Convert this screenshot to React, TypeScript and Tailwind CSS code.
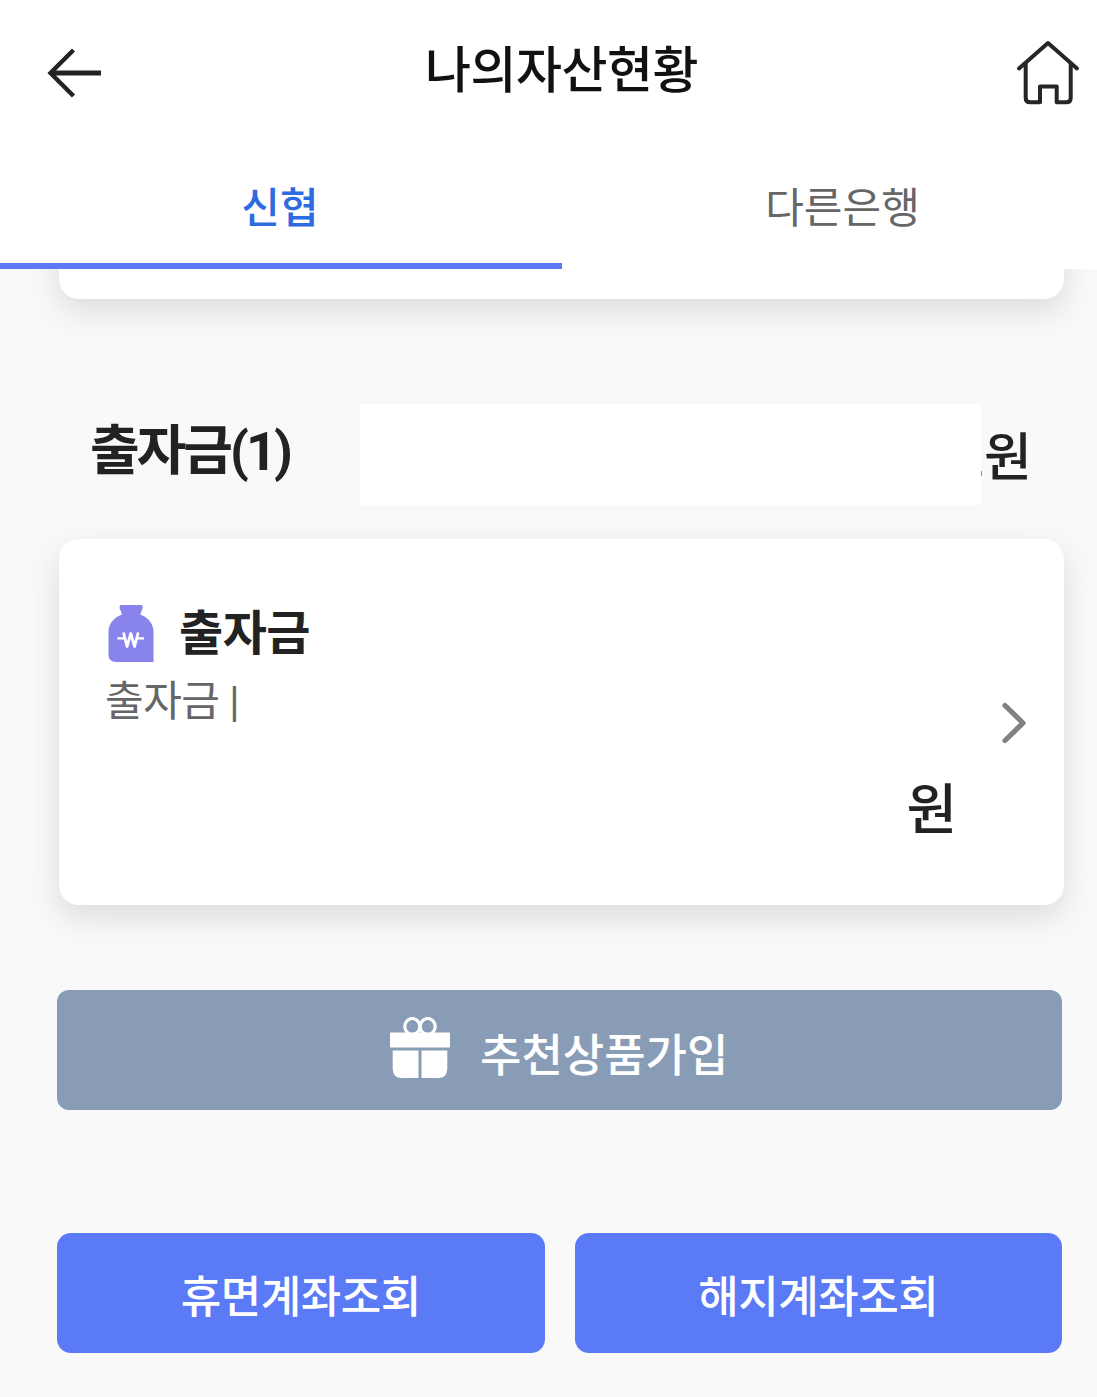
import React from "react";

function BackIcon() {
  return (
    <svg width="56" height="52" viewBox="0 0 56 52" fill="none" stroke="#222" strokeWidth="4.4">
      <path d="M26.500 3 3.500 26l23 23" />
      <path d="M4 26H54" strokeWidth="4.800" />
    </svg>
  );
}

function HomeIcon() {
  return (
    <svg width="64" height="66" viewBox="0 0 64 66" fill="none" stroke="#262626" strokeWidth="4" strokeLinecap="round" strokeLinejoin="round">
      <path d="M3 28.500 32 3l29 25.500" />
      <path d="M9.700 23.500V58q0 4.300 4.500 4.300H24V46.500H40.700V62.300h9.500q4.500 0 4.500-4.300V23.500" />
    </svg>
  );
}

function BottleIcon() {
  return (
    <svg width="46" height="58" viewBox="0 0 46 58" fill="none">
      <path
        fill="#8884ec"
        d="M13 0H33q2.500 0 1.500 3.500L32.300 9.500C40 12.500 45.500 18.500 45.500 26.500V57H8Q.5 57 .5 49.500V26.500C.5 18.500 6 12.500 14 9.500L11.800 3.500Q11 0 13 0Z"
      />
      <path d="M15.500 27.500 19 41.500 22.800 28.500 26.600 41.500 30.200 27.500" stroke="#fff" strokeWidth="2.800" strokeLinejoin="round" />
      <path d="M9.500 33.300H16.500M29 33.300H36" stroke="#fff" strokeWidth="2.300" />
    </svg>
  );
}

function GiftIcon() {
  return (
    <svg width="60" height="62" viewBox="0 0 60 62" fill="none">
      <g stroke="#fff" strokeWidth="3.200">
        <ellipse cx="22.300" cy="9.500" rx="7.500" ry="8" />
        <ellipse cx="37.700" cy="9.500" rx="7.500" ry="8" />
      </g>
      <path fill="#fff" d="M0 15.500H60V30.500H0ZM2.700 33.500H28.500V61H12Q2.700 61 2.700 51.500ZM31.500 33.500H57.300V51.500Q57.300 61 48 61H31.500Z" />
    </svg>
  );
}

function ChevronIcon() {
  return (
    <svg width="26" height="42" viewBox="0 0 26 42" fill="none" stroke="#808184" strokeWidth="5.2" strokeLinecap="round" strokeLinejoin="round">
      <path d="M4 3.500 22 21 4 38.500" />
    </svg>
  );
}

export default function App() {
  return (
    <div className="flex h-[1397px] w-[1097px] flex-col overflow-hidden bg-[#f9f9f9] font-['Noto_Sans_CJK_KR',sans-serif] whitespace-nowrap text-[#222]">
      <div className="relative z-10 bg-white">
        <header className="flex h-[134px] items-start justify-between pr-[17px] pl-[47px]">
          <button className="mt-[47px]"><BackIcon /></button>
          <h1 className="mt-[30px] ml-[4px] text-[50px] leading-[72px] font-medium tracking-[-0.5px] text-[#111]">나의자산현황</h1>
          <button className="mt-[40px]"><HomeIcon /></button>
        </header>
        <nav className="flex h-[135px] text-[42px] leading-[60px]">
          <button className="flex w-[562px] shrink-0 justify-center border-b-[6px] border-[#5d79f5] pt-[41px] pr-[2px] font-medium text-[#2f6be0]">신협</button>
          <button className="flex w-[561px] shrink-0 justify-center pt-[41px] text-[#666]">다른은행</button>
        </nav>
      </div>

      <main className="flex w-[1097px] flex-col pr-[33px] pl-[59px]">
        <div className="-mt-[70px] h-[100px] rounded-[20px] bg-white shadow-[0_12px_32px_rgba(0,0,0,0.12)]" />

        <section className="mt-[105px] flex h-[101px] pl-[31px]">
          <h2 className="mt-[4px] w-[270px] text-[54px] leading-[78px] font-bold tracking-[-3px]">
            출자금<span className="font-[Roboto,sans-serif]">(1)</span>
          </h2>
          <div className="w-[621px] bg-white" />
          <div className="mt-[67px] h-[5px] w-px bg-[#6d93bd]" />
          <span className="mt-[14px] ml-[2px] text-[52px] leading-[72px] font-medium">원</span>
        </section>

        <section className="mt-[34px] flex h-[366px] rounded-[20px] bg-white pl-[46px] shadow-[0_12px_32px_rgba(0,0,0,0.12)]">
          <div className="flex w-[855px] flex-col">
            <div className="mt-[56px] flex h-[72px] pl-[3px]">
              <div className="mt-[10px]"><BottleIcon /></div>
              <h3 className="-mt-[2px] ml-[25px] text-[48px] leading-[72px] font-bold tracking-[-0.5px]">출자금</h3>
            </div>
            <p className="mt-[1px] h-[60px] text-[42px] leading-[60px] tracking-[-0.5px] text-[#666]">
              출자금<span className="font-[Roboto,sans-serif]"> |</span>
            </p>
            <p className="mt-[37px] pr-[3px] text-right text-[55px] leading-[80px] font-medium">원</p>
          </div>
          <button className="mt-[163px] ml-[41px] h-[42px]"><ChevronIcon /></button>
        </section>
      </main>

      <div className="mt-[85px] pr-[35px] pl-[57px]">
        <button className="flex h-[120px] w-full rounded-[12px] bg-[#899cb5] pl-[333px] text-white">
          <span className="mt-[27px]"><GiftIcon /></span>
          <span className="mt-[29px] ml-[30px] text-[45px] leading-[68px] font-medium">추천상품가입</span>
        </button>
        <div className="mt-[123px] grid grid-cols-2 gap-[30px] text-[44px] leading-[64px] font-medium tracking-[-0.5px] text-white">
          <button className="h-[120px] rounded-[14px] bg-[#5b7af6] pt-[2px]">휴면계좌조회</button>
          <button className="h-[120px] rounded-[14px] bg-[#5b7af6] pt-[2px]">해지계좌조회</button>
        </div>
      </div>
    </div>
  );
}
